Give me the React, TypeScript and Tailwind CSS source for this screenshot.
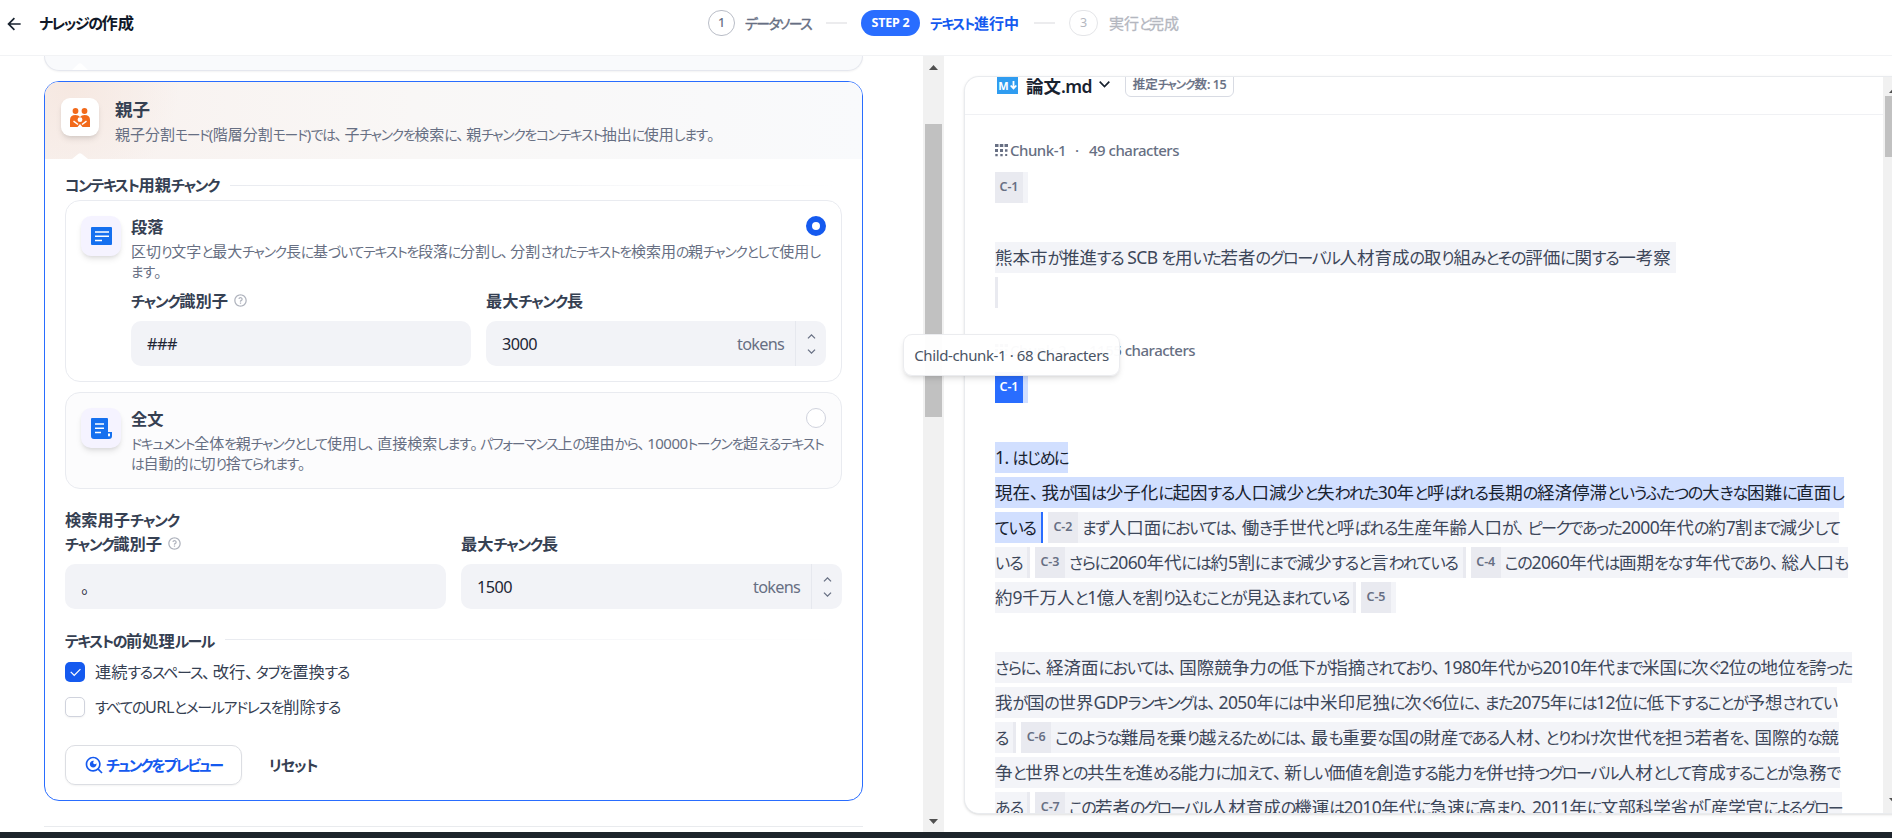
import type { ReactNode } from "react";
import {
  RiArrowDownSLine,
  RiArrowLeftLine,
  RiArrowUpSLine,
  RiCheckLine,
  RiQuestionLine,
  RiSearchEyeLine,
} from "react-icons/ri";

// Kana are set narrower than kanji; --k is the kana tracking of the line.
function Jp({ children }: { children: string }) {
  const runs =
    children.match(/[ぁ-んァ-ヶー]+|[、。]|[\x20-\x7e]+|[^ぁ-んァ-ヶー、。\x20-\x7e]+/g) ?? [];
  return (
    <>
      {runs.map((run, i) => {
        if (/[ぁ-んァ-ヶー]/.test(run))
          return <span key={i} className="text-[0.92em] tracking-[var(--k)]">{run}</span>;
        if (/[、。]/.test(run)) return <span key={i} className="tracking-[0.15em]">{run}</span>;
        if (/[\x20-\x7e]/.test(run)) return <span key={i} className="tracking-[-0.035em]">{run}</span>;
        return <span key={i}>{run}</span>;
      })}
    </>
  );
}

function Header() {
  return (
    <header className="flex h-14 shrink-0 border-b border-[#f2f3f5] bg-white pt-[10px]">
      <div className="flex h-[27px] w-[708px] items-center">
        <RiArrowLeftLine className="ml-[4px] size-5 text-[#18222f]" />
        <h1 className="ml-[15px] text-[16.25px] leading-[27px] font-bold text-[#101828] [--k:-1.45px]">
          <Jp>ナレッジの作成</Jp>
        </h1>
      </div>
      <div className="flex h-[26px] items-center text-[15px] whitespace-nowrap">
        <span className="flex h-[26px] w-[27px] items-center justify-center rounded-full border border-[#b9bdc7] text-[12.5px] font-medium text-[#676f83]">
          1
        </span>
        <span className="ml-[10px] w-[81px] leading-[28px] text-[#676f83] [--k:-1.55px] [-webkit-text-stroke:0.4px]">
          <Jp>データソース</Jp>
        </span>
        <span className="h-[2px] w-[21px] bg-[#ececee]" />
        <span className="ml-[14px] flex h-[26px] w-[59px] items-center justify-center rounded-full bg-[#296dff] text-[12.5px] font-bold tracking-[-0.02em] text-white">
          STEP 2
        </span>
        <span className="ml-[10px] w-[104px] leading-[28px] font-bold text-[#155aef] [--k:-1.4px]">
          <Jp>テキスト進行中</Jp>
        </span>
        <span className="h-[2px] w-[21px] bg-[#ececee]" />
        <span className="ml-[14px] flex h-[26px] w-[29px] items-center justify-center rounded-full border border-[#e4e5e8] text-[12.5px] text-[#b4b7bf]">
          3
        </span>
        <span className="ml-[11px] leading-[28px] text-[#b4b7bf] [--k:-2.1px] [-webkit-text-stroke:0.3px]">
          <Jp>実行と完成</Jp>
        </span>
      </div>
    </header>
  );
}

function FamilyIcon() {
  return (
    <svg className="h-[19px] w-5" viewBox="0 0 20 19">
      <circle cx="5.5" cy="3" r="2.9" fill="#f26a1b" />
      <circle cx="14.5" cy="3" r="2.9" fill="#f26a1b" />
      <path d="M0 19V12Q0 7 5.5 7Q8.5 7 10 9Q11.5 7 14.5 7Q20 7 20 12V19Z" fill="#f26a1b" />
      <circle cx="10" cy="11.7" r="2.4" fill="#fff" />
      <path d="M3.5 13.2L8 16.5M16.5 13.2L12 16.5" stroke="#fff" strokeWidth="1.5" />
      <path d="M10 16l2.5 3h-5z" fill="#fff" />
    </svg>
  );
}

function ParagraphIcon() {
  return (
    <svg className="h-[18px] w-[21px]" viewBox="0 0 21 18">
      <rect width="21" height="18" rx="1" fill="#1570ef" />
      <path d="M4 5h14M4 9.3h14M4 13.5h7" stroke="#fff" strokeWidth="1.4" />
    </svg>
  );
}

function FullDocIcon() {
  return (
    <svg className="size-[21px]" viewBox="0 0 21 21">
      <path d="M1 0h15a1 1 0 0 1 1 1v13h4v4a3 3 0 0 1-3 3H3a3 3 0 0 1-3-3V1a1 1 0 0 1 1-1z" fill="#1570ef" />
      <path d="M4 6h9M4 10.3h9M4 14.5h6" stroke="#fff" strokeWidth="1.4" />
      <path d="M17 15.5h2v2a1 1 0 0 1-2 0z" fill="#fff" />
    </svg>
  );
}

function ChunkIcon() {
  return (
    <svg className="size-[13px]" viewBox="0 0 13 13" fill="#676f83">
      <path d="M0 0h3.5v3H0zM4.800 0h3.500v3H4.800zM9.500 0h3.500v3H9.500zM0 5h3v3H0zM5 5h3v3H5zM10 5.200h2.500v2.500H10zM.3 10h2.400v2.300H.3zM5.300 10h2.400v2.300H5.300zM10.200 10h2v2h-2z" />
    </svg>
  );
}

function FieldLabel({ children, help }: { children: string; help?: boolean }) {
  return (
    <div className="flex h-5 items-center text-[16.25px] leading-5 font-bold text-[#354052] [--k:-1.32px]">
      <span className="h-5 leading-[19px]"><Jp>{children}</Jp></span>
      {help && <RiQuestionLine className="-mt-[3px] ml-[5px] size-[15px] text-[#b0b4be]" />}
    </div>
  );
}

function TextField({ label, value }: { label: string; value: string }) {
  return (
    <div className="flex-1">
      <FieldLabel help>{label}</FieldLabel>
      <div className="mt-[9px] h-[45px] rounded-[10px] bg-[#f2f3f7] px-4 text-[16.25px] leading-[47px] tracking-[-0.03em] text-[#1d2635]">
        {value}
      </div>
    </div>
  );
}

function NumberField({ label, value }: { label: string; value: string }) {
  return (
    <div className="flex-1">
      <FieldLabel>{label}</FieldLabel>
      <div className="mt-[9px] flex h-[45px] rounded-[10px] bg-[#f2f3f7] text-[16.25px] leading-[47px]">
        <span className="flex-1 pl-4 tracking-[-0.035em] text-[#1d2635]">{value}</span>
        <span className="pr-[11px] tracking-[-0.045em] text-[#676f83]">tokens</span>
        <div className="flex w-[31px] flex-col items-center justify-center border-l border-[#e6e8ee] text-[#676f83]">
          <RiArrowUpSLine className="size-[15px]" />
          <RiArrowDownSLine className="size-[15px]" />
        </div>
      </div>
    </div>
  );
}

interface OptionCardProps {
  icon: ReactNode;
  title: string;
  lines: ReactNode;
  selected?: boolean;
  children?: ReactNode;
}

function OptionCard({ icon, title, lines, selected, children }: OptionCardProps) {
  return (
    <div
      className={`flex rounded-[15px] border border-[#e9ebf0] p-[15px] ${selected ? "h-[182px] bg-white" : "h-[97px] bg-[#fcfcfd]"}`}
    >
      <div className="flex size-10 shrink-0 items-center justify-center rounded-[10px] bg-[#f5f3ff] shadow-md shadow-black/10">
        {icon}
      </div>
      <div className="ml-[10px] flex-1">
        <div className="flex h-5 justify-between">
          <h3 className="text-[16.25px] leading-[23px] font-bold text-[#354052]">{title}</h3>
          {selected ? (
            <span className="size-5 rounded-full border-[6px] border-[#155aef] bg-white" />
          ) : (
            <span className="size-5 rounded-full border border-[#d0d3dd] bg-white" />
          )}
        </div>
        <div className="mt-[6px] h-10 text-[15px] leading-[19px] whitespace-nowrap text-[#676f83]">{lines}</div>
        {children}
      </div>
    </div>
  );
}

function SectionTitle({ children }: { children: ReactNode }) {
  return (
    <div className="flex h-5 items-center text-[16.25px] leading-[18px] font-bold whitespace-nowrap text-[#354052]">
      {children}
    </div>
  );
}

function Checkbox({ checked, children }: { checked?: boolean; children: ReactNode }) {
  return (
    <div className="flex h-5 items-center">
      {checked ? (
        <span className="flex size-5 items-center justify-center rounded-[5px] bg-[#155aef]">
          <RiCheckLine className="size-[15px] text-white" />
        </span>
      ) : (
        <span className="size-5 rounded-[5px] border border-[#d0d3dd] bg-white shadow-xs" />
      )}
      <span className="ml-[10px] text-[16.25px] leading-[21px] whitespace-nowrap text-[#354052]">{children}</span>
    </div>
  );
}

function Settings() {
  return (
    <div className="flex-1 pl-11">
      <div className="flex h-[15px] w-[819px] items-end rounded-b-[15px] border-x border-b border-[#e5e7ee] bg-[#f9fafc] pl-[27px] shadow-xs">
        <svg className="h-[7px] w-4" viewBox="0 0 16 7">
          <path d="M0 7L6.500 .8Q8-.5 9.500.8L16 7z" fill="#fff" />
        </svg>
      </div>

      <div className="mt-[10px] h-[720px] w-[819px] overflow-hidden rounded-[15px] border border-[#296dff] bg-white">
        <div className="flex h-[77px] flex-col bg-[radial-gradient(circle_at_24px_4px,#f6e8e1_0px,transparent_110px),linear-gradient(90deg,#f8f1ee_0%,#f9f7f6_45%,#f9fafc_100%)]">
          <div className="flex h-[71px] pt-4 pl-4">
            <div className="flex size-[38px] items-center justify-center rounded-[9px] bg-white shadow-md shadow-black/10">
              <FamilyIcon />
            </div>
            <div className="ml-4 whitespace-nowrap">
              <h2 className="text-[17.5px] leading-[23px] font-bold text-[#354052]">親子</h2>
              <p className="text-[15px] leading-[26px] text-[#676f83] [--k:-1.26px]">
                <Jp>親子分割モード(階層分割モード)では、子チャンクを検索に、親チャンクをコンテキスト抽出に使用します。</Jp>
              </p>
            </div>
          </div>
          <svg className="ml-[27px] h-[6px] w-4" viewBox="0 0 16 6">
            <path d="M0 6L6.500 .7Q8-.4 9.500.7L16 6z" fill="#fff" />
          </svg>
        </div>

        <div className="px-5 pt-4">
          <SectionTitle>
            <span className="[--k:-1.4px]"><Jp>コンテキスト用親チャンク</Jp></span>
            <span className="ml-[11px] h-px flex-1 bg-linear-to-r from-[#e9ebf0] to-white" />
          </SectionTitle>

          <div className="mt-[5px] flex flex-col gap-[10px]">
            <OptionCard
              selected
              icon={<ParagraphIcon />}
              title="段落"
              lines={
                <>
                  <p className="h-5 [--k:-1.19px]">
                    <Jp>区切り文字と最大チャンク長に基づいてテキストを段落に分割し、分割されたテキストを検索用の親チャンクとして使用し</Jp>
                  </p>
                  <p className="h-5 [--k:-1.1px]"><Jp>ます。</Jp></p>
                </>
              }
            >
              <div className="mt-[10px] flex gap-[15px]">
                <TextField label="チャンク識別子" value="###" />
                <NumberField label="最大チャンク長" value="3000" />
              </div>
            </OptionCard>
            <OptionCard
              icon={<FullDocIcon />}
              title="全文"
              lines={
                <>
                  <p className="h-5 [--k:-1.2px]">
                    <Jp>ドキュメント全体を親チャンクとして使用し、直接検索します。パフォーマンス上の理由から、10000トークンを超えるテキスト</Jp>
                  </p>
                  <p className="h-5 [--k:-1.3px]"><Jp>は自動的に切り捨てられます。</Jp></p>
                </>
              }
            />
          </div>

          <div className="mt-[21px]">
            <SectionTitle>
              <span className="[--k:-1.13px]"><Jp>検索用子チャンク</Jp></span>
            </SectionTitle>
          </div>
          <div className="mt-[5px] flex gap-[15px]">
            <TextField label="チャンク識別子" value="。" />
            <NumberField label="最大チャンク長" value="1500" />
          </div>

          <div className="mt-[22px]">
            <SectionTitle>
              <span className="[--k:-1.48px]"><Jp>テキストの前処理ルール</Jp></span>
              <span className="-mt-[3px] ml-[11px] h-px flex-1 bg-linear-to-r from-[#e9ebf0] to-white" />
            </SectionTitle>
          </div>
          <div className="mt-[11px] flex flex-col gap-[15px]">
            <Checkbox checked>
              <span className="[--k:-1.2px]"><Jp>連続するスペース、改行、タブを置換する</Jp></span>
            </Checkbox>
            <Checkbox>
              <span className="[--k:-1.3px]"><Jp>すべてのURLとメールアドレスを削除する</Jp></span>
            </Checkbox>
          </div>

          <div className="mt-7 flex text-[16.25px] font-bold whitespace-nowrap">
            <button className="flex h-10 w-[177px] items-center rounded-[10px] border border-[#dcdee3] bg-white pl-[18px] text-[#155aef] shadow-xs">
              <RiSearchEyeLine className="size-5" />
              <span className="ml-[2px] leading-[41px] [--k:-2.07px]"><Jp>チュンクをプレビュー</Jp></span>
            </button>
            <button className="ml-[27px] h-10 leading-[41px] text-[#354052] [--k:-1px]"><Jp>リセット</Jp></button>
          </div>
        </div>
      </div>
      <div className="mt-[25px] h-px w-[819px] bg-[#e9ebee]" />
    </div>
  );
}

function ArrowHead({ down }: { down?: boolean }) {
  return (
    <svg className="h-[5px] w-[9px] shrink-0" viewBox="0 0 9 5">
      <path d={down ? "M0 0h9L4.500 5z" : "M0 5h9L4.500 0z"} fill="#505050" />
    </svg>
  );
}

function Text({ children, active }: { children: ReactNode; active?: boolean }) {
  return (
    <span className={`h-[31px] leading-[31px] ${active ? "bg-[#d1dfff] text-[#18222f]" : "bg-[#f3f4f8] text-[#3d475a]"}`}>
      {children}
    </span>
  );
}

function Tag({ children, active }: { children: string; active?: boolean }) {
  return (
    <span
      className={`flex h-[31px] items-center justify-center text-[12.5px] font-semibold tracking-[-0.01em] ${active ? "bg-[#296dff] text-white" : "bg-[#e9eaf0] text-[#676f83]"} ${children === "C-1" ? "w-7" : "w-[30px]"}`}
    >
      {children}
    </span>
  );
}

function Bar() {
  return <span className="mr-[5px] h-[31px] w-[3px] bg-[#e9eaf0]" />;
}

function Row({ children }: { children?: ReactNode }) {
  return <div className="flex h-[35px] whitespace-nowrap">{children}</div>;
}

function ChunkLabel({ name, size }: { name: string; size: string }) {
  return (
    <div className="flex h-5 items-center text-[15px] leading-5 font-medium tracking-[-0.033em] whitespace-nowrap text-[#676f83]">
      <ChunkIcon />
      <span className="ml-[2px] w-[61px]">{name}</span>
      <span className="w-[18px] pl-[4px]">·</span>
      <span>{size}</span>
    </div>
  );
}

function Preview() {
  return (
    <div className="relative flex h-[776px] flex-1 flex-col pt-5 pl-5">
      <div className="flex h-[738px] overflow-hidden rounded-l-[15px] border-y border-l border-[#e9ebee] bg-white shadow-sm">
        <div className="w-[918px] shrink-0">
          <div className="flex h-[38px] border-b border-[#f0f1f4] pl-8">
            <span className="flex h-[17px] w-[21px] items-center justify-center bg-[#2f9cf0] font-bold text-white">
              <span className="text-[11px] leading-none">M</span>
              <svg className="ml-px h-[9px] w-[7px]" viewBox="0 0 7 9">
                <path d="M3.500 0v7M.7 4.500l2.800 3 2.800-3" stroke="#fff" strokeWidth="1.800" fill="none" />
              </svg>
            </span>
            <span className="-mt-[3px] ml-2 w-[64px] text-[17.5px] leading-6 font-semibold whitespace-nowrap text-[#18222f]">
              <Jp>論文.md</Jp>
            </span>
            <svg className="mt-1 ml-[9px] h-[7px] w-[11px]" viewBox="0 0 11 7">
              <path d="M.7.7l4.800 4.800L10.300.7" stroke="#18222f" strokeWidth="1.700" fill="none" />
            </svg>
            <span className="-mt-[6px] ml-[15px] h-[26px] w-[109px] rounded-md border border-[#d8dbe3] text-center text-[12.5px] leading-[26px] font-medium whitespace-nowrap text-[#676f83] [--k:-0.9px] [-webkit-text-stroke:0.2px]">
              <Jp>推定チャンク数: 15</Jp>
            </span>
          </div>

          <div className="pl-[30px] text-[17.5px]">
            <div className="mt-[25px]">
              <ChunkLabel name="Chunk-1" size="49 characters" />
            </div>
            <div className="mt-3">
              <Row>
                <Tag>C-1</Tag>
                <span className="h-[31px] w-[5px] bg-[#f3f4f8]" />
              </Row>
              <Row />
              <Row>
                <Text>
                  <span className="pr-[5px] [--k:-1.29px]">
                    <Jp>熊本市が推進する SCB を用いた若者のグローバル人材育成の取り組みとその評価に関する一考察</Jp>
                  </span>
                </Text>
              </Row>
              <Row><Bar /></Row>
            </div>

            <div className="mt-7">
              <ChunkLabel name="Chunk-2" size="1155 characters" />
            </div>
            <div className="mt-3">
              <Row>
                <Tag active>C-1</Tag>
                <span className="h-[31px] w-[5px] bg-[#d1dfff]" />
              </Row>
              <Row />
              <Row>
                <Text active><span className="[--k:-1.55px]"><Jp>1. はじめに</Jp></span></Text>
              </Row>
              <Row>
                <Text active>
                  <span className="[--k:-1.22px]">
                    <Jp>現在、我が国は少子化に起因する人口減少と失われた30年と呼ばれる長期の経済停滞というふたつの大きな困難に直面し</Jp>
                  </span>
                </Text>
              </Row>
              <Row>
                <Text active><span className="pr-[5px] [--k:-1.2px]"><Jp>ている</Jp></span></Text>
                <span className="mr-[5px] h-[31px] w-[2px] bg-[#296dff]" />
                <Tag>C-2</Tag>
                <Text>
                  <span className="pl-[4px] [--k:-1.43px]">
                    <Jp>まず人口面においては、働き手世代と呼ばれる生産年齢人口が、ピークであった2000年代の約7割まで減少して</Jp>
                  </span>
                </Text>
              </Row>
              <Row>
                <Text><span className="pr-[4px] [--k:-0.9px]"><Jp>いる</Jp></span></Text>
                <Bar />
                <Tag>C-3</Tag>
                <Text>
                  <span className="pr-[5px] pl-[4px] [--k:-1.24px]"><Jp>さらに2060年代には約5割にまで減少すると言われている</Jp></span>
                </Text>
                <Bar />
                <Tag>C-4</Tag>
                <Text>
                  <span className="pl-[4px] [--k:-1.3px]"><Jp>この2060年代は画期をなす年代であり、総人口も</Jp></span>
                </Text>
              </Row>
              <Row>
                <Text>
                  <span className="pr-[4px] [--k:-1.36px]"><Jp>約9千万人と1億人を割り込むことが見込まれている</Jp></span>
                </Text>
                <Bar />
                <Tag>C-5</Tag>
                <span className="h-[31px] w-[5px] bg-[#f3f4f8]" />
              </Row>
              <Row />
              <Row>
                <Text>
                  <span className="[--k:-1.37px]">
                    <Jp>さらに、経済面においては、国際競争力の低下が指摘されており、1980年代から2010年代まで米国に次ぐ2位の地位を誇った</Jp>
                  </span>
                </Text>
              </Row>
              <Row>
                <Text>
                  <span className="[--k:-1.39px]">
                    <Jp>我が国の世界GDPランキングは、2050年には中米印尼独に次ぐ6位に、また2075年には12位に低下することが予想されてい</Jp>
                  </span>
                </Text>
              </Row>
              <Row>
                <Text><span className="pr-[5px] [--k:-1.3px]"><Jp>る</Jp></span></Text>
                <Bar />
                <Tag>C-6</Tag>
                <Text>
                  <span className="pl-[4px] [--k:-1.39px]">
                    <Jp>このような難局を乗り越えるためには、最も重要な国の財産である人材、とりわけ次世代を担う若者を、国際的な競</Jp>
                  </span>
                </Text>
              </Row>
              <Row>
                <Text>
                  <span className="[--k:-1.41px]">
                    <Jp>争と世界との共生を進める能力に加えて、新しい価値を創造する能力を併せ持つグローバル人材として育成することが急務で</Jp>
                  </span>
                </Text>
              </Row>
              <Row>
                <Text><span className="pr-[4px] [--k:-0.9px]"><Jp>ある</Jp></span></Text>
                <Bar />
                <Tag>C-7</Tag>
                <Text>
                  <span className="pl-[4px] [--k:-1.85px]">
                    <Jp>この若者のグローバル人材育成の機運は2010年代に急速に高まり、2011年に文部科学省が「産学官によるグロー</Jp>
                  </span>
                </Text>
              </Row>
            </div>
          </div>
        </div>
        <div className="flex flex-1 flex-col overflow-hidden bg-[#f1f1f1] pt-[11px] pb-[10px] pl-[2px]">
          <span className="ml-1"><ArrowHead /></span>
          <span className="mt-[3px] h-[61px] shrink-0 bg-[#c1c1c1]" />
          <span className="mt-auto ml-1"><ArrowHead down /></span>
        </div>
      </div>

      <div className="absolute top-[278px] -left-[41px] h-[42px] w-[217px] rounded-[9px] border border-[#ebecef] bg-white/97 text-center text-[15px] leading-[40px] tracking-[-0.026em] whitespace-nowrap text-[#495464] shadow-md shadow-black/10">
        Child-chunk-1 · 68 Characters
      </div>
    </div>
  );
}

export default function App() {
  return (
    <div className="flex h-[838px] w-[1892px] flex-col overflow-hidden bg-white font-['Noto_Sans','Noto_Sans_CJK_JP',sans-serif] [font-feature-settings:'palt']">
      <Header />
      <main className="flex h-[776px] shrink-0">
        <div className="flex w-[944px] shrink-0">
          <Settings />
          <div className="flex w-[21px] flex-col items-center bg-[#f1f1f1] pt-[9px] pb-2">
            <ArrowHead />
            <span className="mt-[54px] h-[293px] w-[17px] bg-[#c1c1c1]" />
            <span className="mt-auto flex"><ArrowHead down /></span>
          </div>
        </div>
        <Preview />
      </main>
      <div className="flex-1 bg-[#1d242b]" />
    </div>
  );
}
